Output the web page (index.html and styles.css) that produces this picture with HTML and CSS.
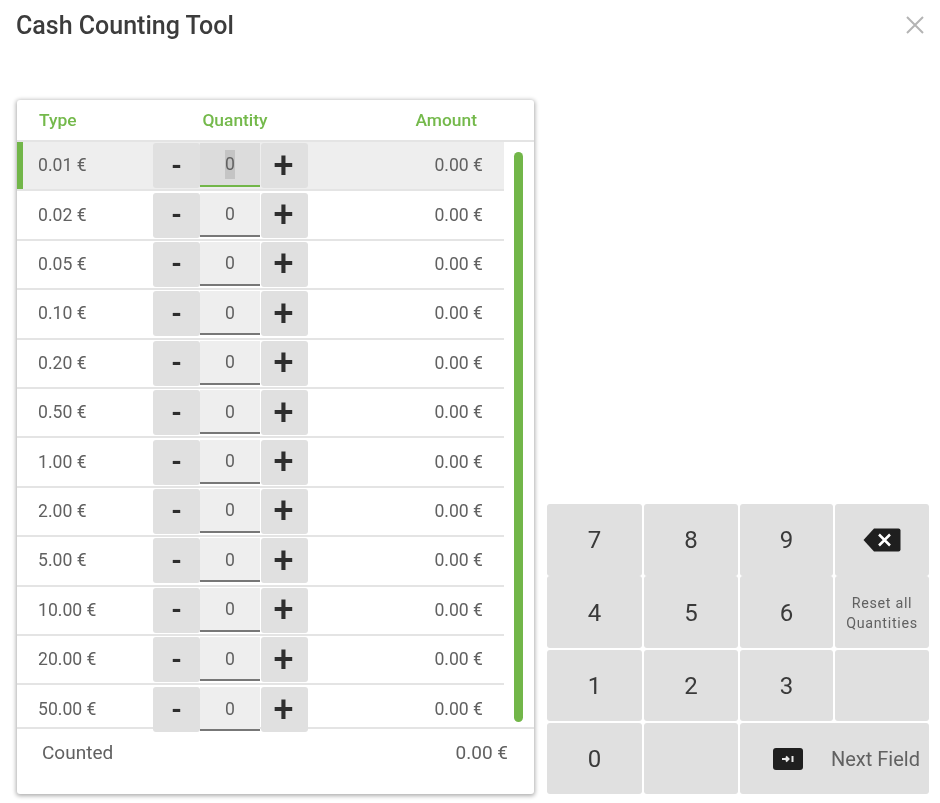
FILE: index.html
```html
<!DOCTYPE html>
<html lang="en">
<head>
<meta charset="utf-8">
<title>Cash Counting Tool</title>
<link rel="stylesheet" href="styles.css">
</head>
<body>
<div class="dialog">
  <header class="dialog-head">
    <h1 class="title">Cash Counting Tool</h1>
    <svg class="close" viewBox="0 0 18 18" width="18" height="18" aria-label="Close"><path d="M1 1 17 17M17 1 1 17"/></svg>
  </header>
  <main class="content">
    <section class="card">
      <div class="thead">
        <span class="th-type">Type</span>
        <span class="th-qty">Quantity</span>
        <span class="th-amount">Amount</span>
      </div>
      <div class="tbody">
        <div class="rows">
          <div class="row active"><span class="type">0.01 €</span><div class="stepper"><span class="btn minus">-</span><span class="qty"><span class="sel">0</span></span><span class="btn plus">+</span></div><span class="amount">0.00 €</span></div>
          <div class="row"><span class="type">0.02 €</span><div class="stepper"><span class="btn minus">-</span><span class="qty">0</span><span class="btn plus">+</span></div><span class="amount">0.00 €</span></div>
          <div class="row"><span class="type">0.05 €</span><div class="stepper"><span class="btn minus">-</span><span class="qty">0</span><span class="btn plus">+</span></div><span class="amount">0.00 €</span></div>
          <div class="row"><span class="type">0.10 €</span><div class="stepper"><span class="btn minus">-</span><span class="qty">0</span><span class="btn plus">+</span></div><span class="amount">0.00 €</span></div>
          <div class="row"><span class="type">0.20 €</span><div class="stepper"><span class="btn minus">-</span><span class="qty">0</span><span class="btn plus">+</span></div><span class="amount">0.00 €</span></div>
          <div class="row"><span class="type">0.50 €</span><div class="stepper"><span class="btn minus">-</span><span class="qty">0</span><span class="btn plus">+</span></div><span class="amount">0.00 €</span></div>
          <div class="row"><span class="type">1.00 €</span><div class="stepper"><span class="btn minus">-</span><span class="qty">0</span><span class="btn plus">+</span></div><span class="amount">0.00 €</span></div>
          <div class="row"><span class="type">2.00 €</span><div class="stepper"><span class="btn minus">-</span><span class="qty">0</span><span class="btn plus">+</span></div><span class="amount">0.00 €</span></div>
          <div class="row"><span class="type">5.00 €</span><div class="stepper"><span class="btn minus">-</span><span class="qty">0</span><span class="btn plus">+</span></div><span class="amount">0.00 €</span></div>
          <div class="row"><span class="type">10.00 €</span><div class="stepper"><span class="btn minus">-</span><span class="qty">0</span><span class="btn plus">+</span></div><span class="amount">0.00 €</span></div>
          <div class="row"><span class="type">20.00 €</span><div class="stepper"><span class="btn minus">-</span><span class="qty">0</span><span class="btn plus">+</span></div><span class="amount">0.00 €</span></div>
          <div class="row last"><span class="type">50.00 €</span><div class="stepper"><span class="btn minus">-</span><span class="qty">0</span><span class="btn plus">+</span></div><span class="amount">0.00 €</span></div>
        </div>
        <div class="scrollbar"></div>
      </div>
      <div class="tfoot"><span>Counted</span><span>0.00 €</span></div>
    </section>
    <section class="keypad">
      <div class="key top">7</div>
      <div class="key top">8</div>
      <div class="key top">9</div>
      <div class="key top"><svg class="backspace" viewBox="0 0 38 24" width="38" height="24"><path class="bs-body" d="M11 0.5H35.5a2 2 0 0 1 2 2V21.500a2 2 0 0 1-2 2H11L0.500 12Z"/><path class="bs-x" d="M16 6.500 27 17.500M27 6.500 16 17.500"/></svg></div>
      <div class="key mid">4</div>
      <div class="key mid">5</div>
      <div class="key mid">6</div>
      <div class="key mid small">Reset all<br>Quantities</div>
      <div class="key">1</div>
      <div class="key">2</div>
      <div class="key">3</div>
      <div class="key"></div>
      <div class="key">0</div>
      <div class="key"></div>
      <div class="key next">
        <svg class="tab" viewBox="0 0 30 22" width="30" height="22"><rect class="tab-bg" width="30" height="22" rx="3"/><path class="tab-arrow" d="M9 11H15.500M13 8.500 15.500 11 13 13.500"/><path class="tab-bar" d="M19.500 8V14"/></svg>
        <span class="next-label">Next Field</span>
      </div>
    </section>
  </main>
</div>
</body>
</html>
```
FILE: styles.css
```css
* { box-sizing: border-box; }
html, body { margin: 0; height: 100%; background: #fff; overflow: hidden; }
body { font-family: Roboto, "Liberation Sans", sans-serif; color: #616161; }
.dialog { width: 940px; height: 803px; display: flex; flex-direction: column; filter: blur(.4px); }
.dialog-head { height: 100px; padding: 11px 17px 0 16px; display: flex; justify-content: space-between; align-items: flex-start; flex: none; }
.title { margin: 0; font-size: 25px; line-height: 29px; font-weight: 500; color: #3c3c3c; }
.close { margin-top: 5px; margin-right: -1px; }
.close path { stroke: #b4b4b4; stroke-width: 2; fill: none; }
.content { display: flex; padding: 0 10px 9px 17px; flex: 1; min-height: 0; }
.card { width: 517px; height: 694px; background: #fff; border-radius: 3px; box-shadow: 0 1px 4px 1px rgba(0,0,0,.32); display: flex; flex-direction: column; flex: none; }
.thead { height: 42px; border-bottom: 2px solid #e4e4e4; display: grid; grid-template-columns: 136px 120px 182px; padding-left: 22px; align-items: center; color: #74b94b; font-size: 17.400px; font-weight: 500; flex: none; }
.th-qty { text-align: center; }
.th-amount { text-align: right; }
.tbody { height: 585px; display: flex; flex: none; position: relative; z-index: 1; }
.rows { width: 487px; flex: none; }
.row { height: 49.400px; display: flex; align-items: center; border-bottom: 2px solid #e4e4e4; font-size: 17.600px; }
.row.last { border-bottom: 0; height: 47px; padding-top: 2px; }
.row.active { background: #eee; box-shadow: inset 6px 0 0 #72b649; }
.type { width: 136px; padding: 0 0 1px 21px; flex: none; }
.stepper { display: flex; width: 155px; height: 45px; flex: none; }
.btn { width: 47px; background: #e0e0e0; border-radius: 3px; display: flex; align-items: center; justify-content: center; color: #2e2e2e; font-weight: 700; flex: none; }
.btn.minus { font-size: 27px; }
.btn.plus { margin-left: 1px; padding-right: 2px; font-size: 36px; font-weight: 500; line-height: 1; }
.qty { width: 60px; height: 44px; padding-top: 1px; background: #eee; border-bottom: 2px solid #777; display: flex; align-items: center; justify-content: center; flex: none; }
.active .qty { background: #dcdcdc; border-bottom-color: #72b649; }
.sel { background: #c4c4c4; padding: 0 .5px; line-height: 29px; }
.amount { width: 175px; padding-bottom: 1px; text-align: right; flex: none; }
.scrollbar { width: 9px; height: 570px; margin: 10px 0 0 10px; background: #72b649; border-radius: 5px; flex: none; }
.tfoot { height: 67px; border-top: 2px solid #e4e4e4; display: flex; justify-content: space-between; padding: 13px 26px 0 25px; font-size: 19px; line-height: 22px; flex: none; }
.keypad { margin: 404px 0 0 13px; width: 383px; height: 290px; display: grid; grid-template-columns: 95px 94px 93px 94px; grid-template-rows: 71px 71px 71px 71px; column-gap: 2px; row-gap: 2px; color: #3a3a3a; font-size: 24px; flex: none; }
.key { background: #e0e0e0; border-radius: 3px; display: flex; align-items: center; justify-content: center; }
.key.top { margin-bottom: -1px; }
.key.mid { margin-top: -1px; padding-top: 2px; }
.key.small { font-size: 14.300px; line-height: 20px; text-align: center; color: #616161; letter-spacing: .7px; }
.key.next { grid-column: span 2; justify-content: flex-start; padding-left: 33px; }
.next-label { margin-left: 28px; font-size: 20px; color: #616161; }
.bs-body, .tab-bg { fill: #1f1f1f; }
.bs-x { stroke: #fff; stroke-width: 2.500; fill: none; }
.tab-arrow, .tab-bar { stroke: #e8e8e8; stroke-width: 2; fill: none; }
```
